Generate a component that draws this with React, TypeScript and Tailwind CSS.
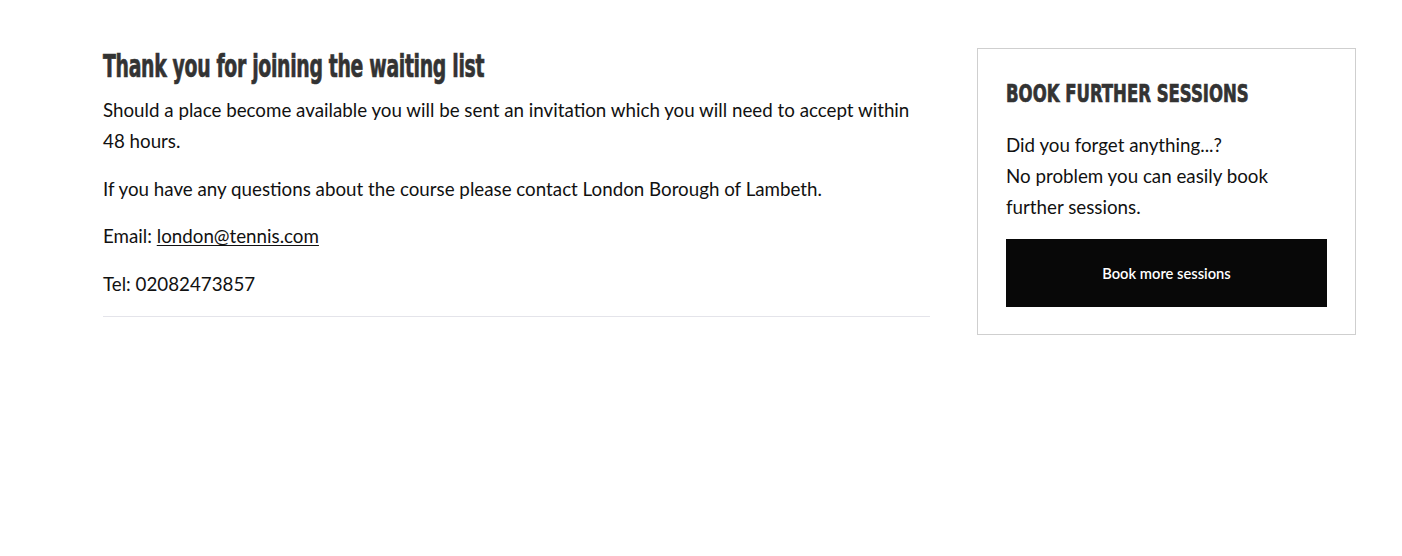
export default function App() {
  const body = "font-['Lato',sans-serif] text-[18.75px] leading-[31px] text-[#111]";
  const display =
    "origin-left whitespace-nowrap font-['DejaVu_Sans_Condensed','DejaVu_Sans',sans-serif] font-bold text-[#333] [-webkit-text-stroke:0.7px_#333]";
  return (
    <main className="min-h-screen bg-white pt-[48px] pl-[103px]">
      <div className="flex items-start gap-[47px]">
        <section className="w-[827px] pt-[3px]">
          <h1 className={`${display} scale-x-[0.655] text-[32px] leading-[30px] tracking-[-0.5px]`}>
            Thank you for joining the waiting list
          </h1>
          <div className={`${body} mt-[13px]`}>
            <p className="mb-[17px]">
              Should a place become available you will be sent an invitation which you will need to accept within 48
              hours.
            </p>
            <p className="mb-[16px]">If you have any questions about the course please contact London Borough of Lambeth.</p>
            <p className="mb-[17px]">
              Email:{" "}
              <a href="#" className="underline underline-offset-2">
                london@tennis.com
              </a>
            </p>
            <p>Tel: 02082473857</p>
          </div>
          <hr className="mt-[17px] border-t border-[#e4e4ea]" />
        </section>

        <aside className="w-[379px] border border-[#cfcfcf] px-[28px] pt-[30px] pb-[27px]">
          <h2 className={`${display} scale-x-[0.765] text-[24px] leading-[30px]`}>BOOK FURTHER SESSIONS</h2>
          <p className={`${body} mt-[20px]`}>
            Did you forget anything...?
            <br />
            No problem you can easily book
            <br />
            further sessions.
          </p>
          <button className="mt-[17px] flex h-[68px] w-full items-center justify-center bg-[#080808] font-['Lato',sans-serif] text-[14.7px] font-semibold text-white">
            Book more sessions
          </button>
        </aside>
      </div>
    </main>
  );
}
